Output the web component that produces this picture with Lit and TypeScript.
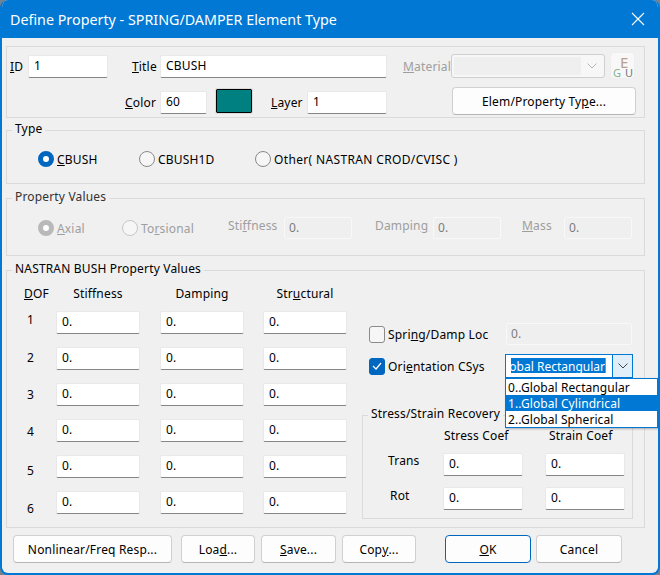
import { LitElement, html, css } from "lit";
import { customElement } from "lit/decorators.js";

const ROW_OFFSETS = [-2, 0, 1, 2, 5, 7];

@customElement("app-root")
export class AppRoot extends LitElement {
  static styles = css`
    :host { display: block; width: 660px; height: 575px; background: #77828d; font-family: "Noto Sans", "Open Sans", sans-serif; font-size: 12px; letter-spacing: .17px; color: #000; overflow: hidden; }
    * { box-sizing: border-box; }
    .win { width: 660px; height: 575px; background: #f0f0f0; border: 2px solid #0078d4; border-top: 0; border-radius: 8px; overflow: hidden; display: flex; flex-direction: column; position: relative; }
    .titlebar { height: 38px; margin: 0 -2px; background: #0078d4; color: #fff; display: flex; align-items: center; justify-content: space-between; padding: 0 10px 0 10px; font-size: 14.3px; letter-spacing: 0; flex: none; }
    .close { width: 16px; height: 16px; margin: 0 4px 0 0; }
    .body { padding: 8px 13px 0 4px; flex: 1; display: flex; flex-direction: column; }
    fieldset { margin: 0; padding: 0; border: 1px solid #dadada; min-width: 0; display: block; }
    legend { margin-left: 5px; padding: 0 3px; height: 16px; line-height: 14px; }
    .g1 { height: 72px; padding: 7px 0 0 3px; border: 1px solid #dadada; }
    .row { display: flex; align-items: center; height: 24px; }
    .r2 { margin-top: 9px; padding-left: 115px; height: 28px; }
    .lab { display: block; }
    .r2 .lab { margin-top: 2px; }
    .f { height: 23px; background: #fff; border: 1px solid #e8e8e8; border-bottom: 1px solid #858585; border-radius: 2px; padding: 0 0 2px 5px; display: flex; align-items: center; }
    .r2 .f { margin-top: 2px; }
    .w80 { width: 80px; } .w84 { width: 84px; } .w47 { width: 47px; } .w227 { width: 227px; }
    .dis { color: #9e9e9e; }
    .fd { background: #efefef; border: 1px solid #f8f8f8; border-radius: 2px; height: 22px; display: flex; align-items: center; padding: 0 0 1px 4px; color: #7c7c7c; }
    .id { width: 18px; } .title { width: 28px; margin-left: 24px; } .mat { width: 48px; margin-left: 16px; }
    .sel { width: 154px; height: 24px; border: 1px solid #cfcfcf; border-radius: 3px; background: #f7f7f7; padding: 2px; display: flex; align-items: center; }
    .sel i { width: 127px; height: 18px; background: #efefef; display: block; }
    .sel svg { margin-left: 5px; }
    .eg { width: 25px; height: 27px; margin: -2px 0 -1px 5px; background: #f8f8f8; border: 1px solid #eeeeee; border-radius: 4px; display: grid; grid-template-columns: 12px 11px; grid-template-rows: 12px 10px; padding: 3px 0 0 2px; letter-spacing: 0; }
    .eg .e { grid-column: 1 / 3; padding-left: 7px; color: #b9a08f; font-size: 15px; line-height: 12px; }
    .eg .gg { color: #86b08e; font-size: 11px; line-height: 10px; } .eg .u { color: #6d7a80; font-size: 11px; line-height: 10px; }
    .color { width: 35px; } .swatch { width: 36px; height: 24px; margin-left: 9px; background: #008080; border: 1px solid #000; outline: 1px solid #dcdcdc; border-radius: 1px; }
    .layer { width: 36px; margin-left: 19px; }
    .btn { height: 28px; background: #fdfdfd; border: 1px solid #d0d0d0; border-bottom-color: #b5b5b5; border-radius: 4px; display: flex; align-items: center; justify-content: center; }
    .et { width: 184px; margin-left: 65px; }
    .gType { height: 62px; margin-top: 4px; }
    .gProp { height: 66px; margin-top: 6px; color: #333; }
    .gNas { height: 266px; margin-top: 6px; }
    .choices { display: flex; align-items: center; padding-left: 31px; height: 28px; margin-top: 7px; }
    .choice { display: flex; align-items: center; gap: 3px; }
    .radio { width: 16px; height: 16px; border-radius: 50%; border: 1px solid #8a8a8a; background: #f6f6f6; flex: none; }
    .radio.on { border: 5px solid #0067c0; background: #fff; }
    .radio.don { border: 5px solid #b9b9b9; background: #fff; }
    .radio.doff { border-color: #c6c6c6; }
    .c1 { width: 101px; } .c2 { width: 116px; } .c3 { letter-spacing: .35px; }
    .pv { display: flex; align-items: center; padding-left: 31px; height: 22px; margin-top: 11px; }
    .cx { width: 84px; } .tors { width: 106px; }
    .stlab { width: 56px; margin-top: -5px; }
    .dlab { margin-left: 23px; width: 58px; margin-top: -5px; }
    .mlab { margin-left: 21px; width: 42px; margin-top: -5px; }
    .w68 { width: 68px; }
    .nas { display: flex; padding: 9px 0 0 17px; }
    .grid { display: grid; grid-template-columns: 32px 104px 103px 84px; grid-template-rows: 10px repeat(6, 22px); row-gap: 14px; width: 323px; }
    .h { width: 84px; text-align: center; line-height: 12px; margin-top: 1px; }
    .dof { line-height: 12px; margin-top: 1px; }
    .n { padding-left: 3px; line-height: 22px; }
    .right { margin-left: 15px; width: 271px; padding-top: 36px; }
    .rr { display: flex; align-items: center; padding-left: 7px; }
    .rr2 { margin-top: 9px; }
    .check { width: 16px; height: 17px; border: 1px solid #8a8a8a; border-radius: 3px; background: #f6f6f6; margin-right: 3px; flex: none; display: flex; align-items: center; justify-content: center; }
    .check.on { background: #0067c0; border-color: #0067c0; }
    .sl { width: 118px; }
    .wide { width: 126px; }
    .combo { width: 128px; height: 24px; border: 1px solid #0078d4; background: #fff; position: relative; display: flex; }
    .slabel { width: 117px; }
    .edit { flex: 1; padding: 3px 0 3px 5px; }
    .hl { height: 15px; width: 95px; background: #0078d4; color: #fff; display: flex; justify-content: flex-end; overflow: hidden; white-space: nowrap; line-height: 17px; letter-spacing: 0; border-right: 1px solid #e8792a; flex: none; }
    .arrow { width: 20px; background: #e0eef9; border-left: 1px solid #0078d4; display: flex; align-items: center; justify-content: center; }
    .list { position: absolute; left: -1px; top: 23px; width: 153px; height: 50px; background: #fff; border: 1px solid #0078d4; box-shadow: 1px 1px 2px rgba(0,0,0,.3); z-index: 2; letter-spacing: .08px; }
    .list div { height: 16px; line-height: 18px; padding-left: 2px; white-space: nowrap; }
    .list .cur { background: #0078d4; color: #fff; }
    .gStress { margin-top: 29px; height: 112px; width: 271px; }
    .sg { display: grid; grid-template-columns: 55px 102px 80px; grid-template-rows: 12px 22px 22px; row-gap: 12px; padding: 6px 0 0 25px; }
    .sg .sh { line-height: 14px; padding-left: 1px; }
    .sg .sh2 { line-height: 14px; padding-left: 4px; }
    .sg .sr { line-height: 14px; padding-top: 1px; }
    .sg .rot { line-height: 14px; padding: 2px 0 0 2px; }
    .foot { display: flex; margin-top: 7px; padding-left: 7px; align-items: center; }
    .b1 { width: 159px; } .b2 { width: 74px; margin-left: 9px; } .b3 { width: 75px; margin-left: 6px; } .b4 { width: 74px; margin-left: 6px; }
    .ok { width: 86px; margin-left: 29px; border: 1px solid #0067c0; }
    .cancel { width: 86px; margin-left: 5px; }
  `;

  private field(v: string) { return html`<div class="f w84">${v}</div>`; }

  render() {
    const chev = (c: string) => html`<svg width="12" height="8" viewBox="0 0 12 8"><path d="M1.5 1.5 L6 6 L10.5 1.5" fill="none" stroke=${c} stroke-width="1"/></svg>`;
    return html`
      <div class="win">
        <div class="titlebar">
          <span>Define Property - SPRING/DAMPER Element Type</span>
          <svg class="close" viewBox="0 0 16 16"><path d="M2 2 L14 14 M14 2 L2 14" stroke="#fff" stroke-width="1.1" fill="none"/></svg>
        </div>
        <div class="body">
          <div class="g1">
            <div class="row">
              <span class="lab id"><u>I</u>D</span><div class="f w80">1</div>
              <span class="lab title"><u>T</u>itle</span><div class="f w227">CBUSH</div>
              <span class="lab mat dis"><u>M</u>aterial</span>
              <div class="sel"><i></i>${chev("#b5b5b5")}</div>
              <div class="eg"><span class="e">E</span><span class="gg">G</span><span class="u">U</span></div>
            </div>
            <div class="row r2">
              <span class="lab color"><u>C</u>olor</span><div class="f w47">60</div>
              <div class="swatch"></div>
              <span class="lab layer"><u>L</u>ayer</span><div class="f w80">1</div>
              <div class="btn et">Elem/Property Ty<u>p</u>e...</div>
            </div>
          </div>

          <fieldset class="gType">
            <legend>Type</legend>
            <div class="choices">
              <label class="choice c1"><span class="radio on"></span><span><u>C</u>BUSH</span></label>
              <label class="choice c2"><span class="radio"></span><span>CBUSH1D</span></label>
              <label class="choice c3"><span class="radio"></span><span>Other( NASTRAN CROD/CVISC )</span></label>
            </div>
          </fieldset>

          <fieldset class="gProp">
            <legend>Property Values</legend>
            <div class="pv dis">
              <label class="choice cx"><span class="radio don"></span><span><u>A</u>xial</span></label>
              <label class="choice tors"><span class="radio doff"></span><span>To<u>r</u>sional</span></label>
              <span class="stlab">Sti<u>f</u>fness</span><div class="fd w68">0.</div>
              <span class="dlab">Dampin<u>g</u></span><div class="fd w68">0.</div>
              <span class="mlab"><u>M</u>ass</span><div class="fd w68">0.</div>
            </div>
          </fieldset>

          <fieldset class="gNas">
            <legend>NASTRAN BUSH Property Values</legend>
            <div class="nas">
              <div class="grid">
                <span class="dof"><u>D</u>OF</span>
                <span class="h">Stiffness</span><span class="h">Damping</span><span class="h">Str<u>u</u>ctural</span>
                ${ROW_OFFSETS.map((o, i) => html`
                  <span class="n" style="margin-top:${o}px">${i + 1}</span>
                  ${this.field("0.")}${this.field("0.")}${this.field("0.")}
                `)}
              </div>
              <div class="right">
                <div class="rr">
                  <span class="check"></span><span class="sl">Spri<u>n</u>g/Damp Loc</span>
                  <div class="fd wide">0.</div>
                </div>
                <div class="rr rr2">
                  <span class="check on"><svg width="10" height="8" viewBox="0 0 10 8"><path d="M1 4 L4 7 L9 1" stroke="#fff" stroke-width="1.2" fill="none"/></svg></span>
                  <span class="slabel">Ori<u>e</u>ntation CSys</span>
                  <div class="combo">
                    <div class="edit"><div class="hl"><span>0..Global Rectangular</span></div></div>
                    <div class="arrow">${chev("#444")}</div>
                    <div class="list">
                      <div>0..Global Rectangular</div>
                      <div class="cur">1..Global Cylindrical</div>
                      <div>2..Global Spherical</div>
                    </div>
                  </div>
                </div>
                <fieldset class="gStress">
                  <legend>Stress/Strain Recovery</legend>
                  <div class="sg">
                    <span></span><span class="sh">Stress Coef</span><span class="sh2">Strain Coef</span>
                    <span class="sr">Trans</span><div class="f w80">0.</div><div class="f w80">0.</div>
                    <span class="rot">Rot</span><div class="f w80">0.</div><div class="f w80">0.</div>
                  </div>
                </fieldset>
              </div>
            </div>
          </fieldset>

          <div class="foot">
            <div class="btn b1">Nonlinear/Freq Resp...</div>
            <div class="btn b2">Loa<u>d</u>...</div>
            <div class="btn b3"><u>S</u>ave...</div>
            <div class="btn b4">Cop<u>y</u>...</div>
            <div class="btn ok"><u>O</u>K</div>
            <div class="btn cancel">Cancel</div>
          </div>
        </div>
      </div>
    `;
  }
}
